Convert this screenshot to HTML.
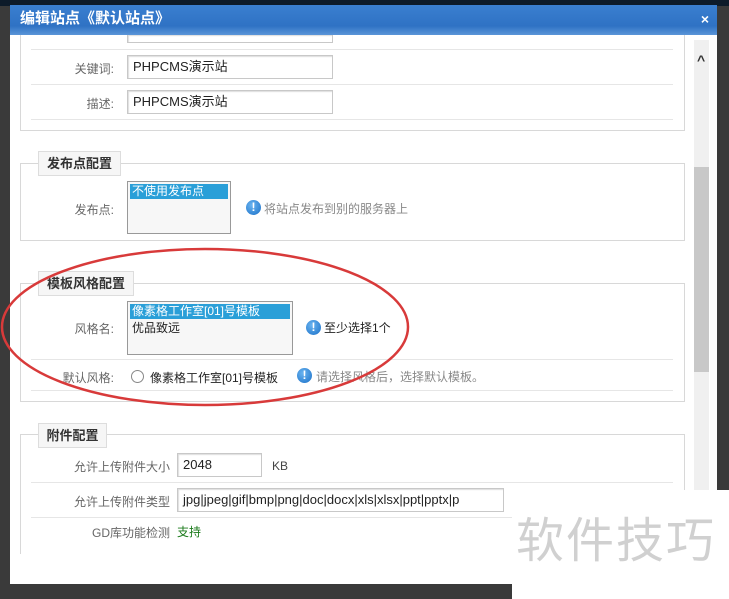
<!DOCTYPE html>
<html><head><meta charset="utf-8"><style>
*{margin:0;padding:0;box-sizing:border-box}
body{width:729px;height:599px;overflow:hidden;background:#3a3a3a;font-family:"Liberation Sans","Noto Sans CJK SC",sans-serif;font-size:12px;color:#444;position:relative}
.a{position:absolute}
.top{left:0;top:0;width:729px;height:6px;background:#0d1b2a}
.title{left:10px;top:5px;width:707px;height:30px;background:linear-gradient(#3a7fd0,#2f72c4 70%,#5a95d8);color:#fff;font-weight:bold;font-size:15px;line-height:28px;padding-left:10px}
.x{right:8px;top:0;font-size:14px}
.body{left:10px;top:35px;width:707px;height:549px;background:#fff}
.sb{left:694px;top:40px;width:15px;height:450px;background:#f0f0f0}
.thumb{left:694px;top:167px;width:15px;height:205px;background:#c8c8c8}
.box{border:1px solid #d8d8d8}
.line{height:1px;background:#e6e6e6}
.inp{border:1px solid #c8c8c8;background:#fff;color:#222;font-size:13px;line-height:22px;padding-left:5px;box-shadow:inset 1px 1px 1px #ddd}
.lg{background:#f6f6f6;border:1px solid #ddd;font-weight:bold;color:#333;font-size:13px;text-align:center;line-height:23px;white-space:nowrap}
.lbl{text-align:right;color:#666;font-size:12px}
.sel{border:1px solid #999;background:#f7f7f7;font-size:12px;color:#222}
.opt{background:#2a9fd8;color:#fff;margin:2px 2px 0 2px;padding-left:2px;height:15px;line-height:15px}
.ic{width:15px;height:15px;border-radius:50%;background:radial-gradient(circle at 40% 35%,#6ab4f0,#1a70c8);color:#fff;font-weight:bold;font-size:12px;text-align:center;line-height:15px}
</style></head><body>
<div class="a top"></div>
<div class="a body"></div>
<div class="a title">编辑站点《默认站点》<span class="a x">×</span></div>
<div class="a sb"></div><div class="a thumb"></div>
<div class="a" style="left:697px;top:52px;font-size:14px;color:#333;font-weight:bold">^</div>

<div class="a box" style="left:20px;top:35px;width:665px;height:96px;border-top:none"></div>
<div class="a inp" style="left:127px;top:35px;width:206px;height:8px;border-top:none"></div>
<div class="a line" style="left:31px;top:49px;width:642px"></div>
<div class="a lbl" style="left:40px;top:60px;width:74px">关键词:</div>
<div class="a inp" style="left:127px;top:55px;width:206px;height:24px">PHPCMS演示站</div>
<div class="a line" style="left:31px;top:84px;width:642px"></div>
<div class="a lbl" style="left:40px;top:95px;width:74px">描述:</div>
<div class="a inp" style="left:127px;top:90px;width:206px;height:24px">PHPCMS演示站</div>
<div class="a line" style="left:31px;top:119px;width:642px"></div>

<div class="a box" style="left:20px;top:163px;width:665px;height:78px"></div>
<div class="a lg" style="left:38px;top:151px;width:83px;height:25px">发布点配置</div>
<div class="a lbl" style="left:40px;top:201px;width:74px">发布点:</div>
<div class="a sel" style="left:127px;top:181px;width:104px;height:53px"><div class="opt">不使用发布点</div></div>
<div class="a ic" style="left:246px;top:200px">!</div>
<div class="a" style="left:264px;top:200px;color:#888">将站点发布到别的服务器上</div>

<div class="a box" style="left:20px;top:283px;width:665px;height:119px"></div>
<div class="a lg" style="left:38px;top:271px;width:96px;height:25px">模板风格配置</div>
<div class="a lbl" style="left:40px;top:320px;width:74px">风格名:</div>
<div class="a sel" style="left:127px;top:301px;width:166px;height:54px"><div class="opt">像素格工作室[01]号模板</div><div style="padding-left:4px">优品致远</div></div>
<div class="a ic" style="left:306px;top:320px">!</div>
<div class="a" style="left:324px;top:319px;color:#222">至少选择1个</div>
<div class="a line" style="left:31px;top:359px;width:642px"></div>
<div class="a lbl" style="left:40px;top:369px;width:74px">默认风格:</div>
<div class="a" style="left:131px;top:370px;width:13px;height:13px;border:1px solid #888;border-radius:50%;background:#fff"></div>
<div class="a" style="left:150px;top:369px;color:#222">像素格工作室[01]号模板</div>
<div class="a ic" style="left:297px;top:368px">!</div>
<div class="a" style="left:316px;top:368px;color:#888">请选择风格后，选择默认模板。</div>
<div class="a line" style="left:31px;top:390px;width:642px"></div>

<div class="a box" style="left:20px;top:434px;width:665px;height:120px;border-bottom:none"></div>
<div class="a lg" style="left:38px;top:423px;width:69px;height:25px">附件配置</div>
<div class="a lbl" style="left:40px;top:458px;width:130px">允许上传附件大小</div>
<div class="a inp" style="left:177px;top:453px;width:85px;height:24px">2048</div>
<div class="a" style="left:272px;top:459px;color:#444">KB</div>
<div class="a line" style="left:31px;top:482px;width:642px"></div>
<div class="a lbl" style="left:40px;top:493px;width:130px">允许上传附件类型</div>
<div class="a inp" style="left:177px;top:488px;width:327px;height:24px;white-space:nowrap;overflow:hidden">jpg|jpeg|gif|bmp|png|doc|docx|xls|xlsx|ppt|pptx|p</div>
<div class="a line" style="left:31px;top:517px;width:642px"></div>
<div class="a lbl" style="left:40px;top:524px;width:130px">GD库功能检测</div>
<div class="a" style="left:177px;top:523px;color:#1a7a1a">支持</div>
<div class="a" style="left:0;top:584px;width:512px;height:15px;background:#3a3a3a"></div>

<div class="a" style="left:512px;top:490px;width:217px;height:109px;background:#fff"></div>
<div class="a" style="left:516px;top:512px;font-size:48px;color:#d0d0d0;letter-spacing:2px;line-height:60px">软件技巧</div>

<svg class="a" style="left:0;top:245px" width="420" height="165"><ellipse cx="205" cy="82" rx="203" ry="78" fill="none" stroke="#d83a3a" stroke-width="2.5"/></svg>
</body></html>
